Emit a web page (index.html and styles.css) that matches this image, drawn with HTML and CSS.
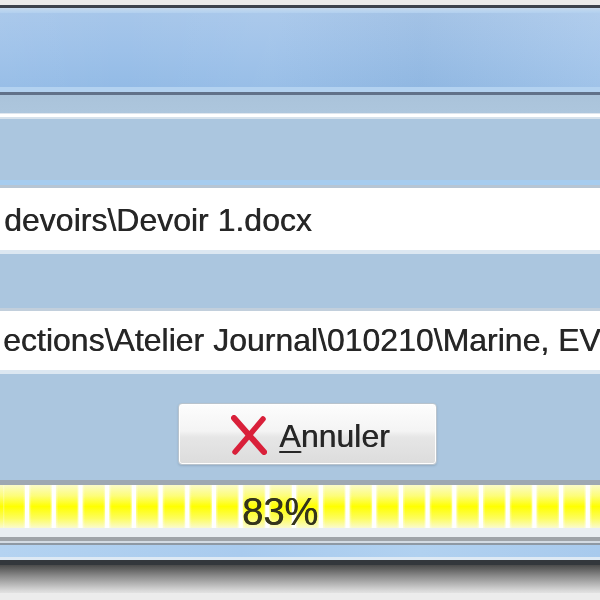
FILE: index.html
```html
<!DOCTYPE html>
<html lang="fr">
<head>
<meta charset="utf-8">
<title>Copie en cours</title>
<link rel="stylesheet" href="styles.css">
</head>
<body>
<div class="window">
  <div class="chrome-top">
    <div class="strip-light"></div>
    <div class="strip-dark"></div>
    <div class="strip-hl"></div>
  </div>
  <div class="titlebar"></div>
  <div class="title-edge">
    <div class="edge-light"></div>
    <div class="edge-dark"></div>
  </div>
  <div class="band"></div>
  <div class="band-sep"></div>
  <div class="content">
    <div class="field field-source"><span class="field-text">devoirs\Devoir 1.docx</span></div>
    <div class="field field-dest"><span class="field-text">ections\Atelier Journal\010210\Marine, EV</span></div>
    <div class="actions">
      <button class="btn" type="button">
        <svg class="btn-icon" width="40" height="42" viewBox="0 0 40 42" aria-hidden="true">
          <path d="M5 4 L35 38" stroke="#d9203a" stroke-width="6" stroke-linecap="round" fill="none"/>
          <path d="M34 5 L6 38" stroke="#d9203a" stroke-width="5.5" stroke-linecap="round" fill="none"/>
        </svg>
        <span class="btn-label"><u>A</u>nnuler</span>
      </button>
    </div>
  </div>
  <div class="progress">
    <div class="progress-fill"></div>
    <span class="progress-label">83%</span>
  </div>
  <div class="chrome-bottom">
    <div class="b-gray"></div>
    <div class="b-pale"></div>
    <div class="b-gray2"></div>
    <div class="b-blue"></div>
    <div class="b-blue-hl"></div>
    <div class="b-dark"></div>
    <div class="b-shadow"></div>
    <div class="b-base"></div>
  </div>
</div>
</body>
</html>
```

FILE: styles.css
```css
html, body {
  margin: 0;
  padding: 0;
  width: 600px;
  height: 600px;
  overflow: hidden;
  background: #ececec;
  font-family: "Liberation Sans", Arial, sans-serif;
}

.window {
  width: 600px;
  height: 600px;
  display: flex;
  flex-direction: column;
  overflow: hidden;
}

/* top window frame */
.strip-light { height: 5px; background: #ebebeb; }
.strip-dark { height: 3px; background: #3d434d; }
.strip-hl { height: 5px; background: linear-gradient(#c4d9ee, #b2d0ef); }

.titlebar {
  height: 74px;
  background:
    linear-gradient(90deg, rgba(255,255,255,0.05) 0%, rgba(0,0,0,0) 20%, rgba(255,255,255,0.06) 45%, rgba(0,0,0,0.02) 70%, rgba(255,255,255,0.12) 100%),
    linear-gradient(#a6c6ea, #9dc1e9 50%, #93bbe6);
}

.edge-light { height: 5px; background: #b3d2f0; }
.edge-dark { height: 3px; background: #617189; }

.band {
  height: 18px;
  background: linear-gradient(#aac3da, #adc6dd);
}

.band-sep {
  height: 6px;
  background: linear-gradient(#dfe6ee 0, #dfe6ee 1px, #ffffff 1px, #ffffff 4px, #d7e2ec 4px);
}

/* dialog body */
.content {
  height: 361px;
  background: #abc6df;
  display: flex;
  flex-direction: column;
}

.field {
  background: #ffffff;
  overflow: hidden;
  white-space: nowrap;
  color: #262626;
  font-size: 32px;
  box-sizing: border-box;
}

.field-text {
  display: block;
  text-shadow: 0.5px 0 0 #3a3a3a;
  filter: blur(0.45px);
}

.field-source {
  margin-top: 66px;
  height: 69px;
  border-top: 3px solid #b7c5d3;
  border-bottom: 4px solid #dce7f1;
  box-shadow: 0 -5px 0 #a6ccef;
  line-height: 62px;
  padding-left: 4px;
}

.field-source .field-text { padding-top: 1px; }

.field-dest {
  margin-top: 54px;
  height: 66px;
  border-top: 3px solid #c2cfdc;
  border-bottom: 4px solid #dce7f1;
  line-height: 59px;
  padding-left: 3px;
  letter-spacing: 0;
}

.actions {
  margin-top: 29px;
  padding-left: 178px;
  display: flex;
}

.btn {
  width: 259px;
  height: 62px;
  box-sizing: border-box;
  border: 1px solid #b9c3cc;
  border-radius: 4px;
  background: linear-gradient(#fdfdfd 0%, #f4f4f4 45%, #e6e6e6 55%, #dcdcdc 100%);
  box-shadow: inset 0 0 0 1px #ffffff, 0 1px 2px rgba(80,100,120,0.25);
  display: flex;
  align-items: center;
  justify-content: center;
  gap: 10px;
  padding: 0 0 0 4px;
  font-family: "Liberation Sans", Arial, sans-serif;
  font-size: 32px;
  color: #262626;
}

.btn-icon { display: block; margin-top: 2px; filter: blur(0.4px); }

.btn-label {
  line-height: 62px;
  padding-top: 3px;
  text-shadow: 0.5px 0 0 #3a3a3a;
  filter: blur(0.45px);
}

.btn-label u { text-decoration-thickness: 2px; text-underline-offset: 4px; }

/* progress bar */
.progress {
  position: relative;
  height: 57px;
  box-sizing: border-box;
  border-top: 5px solid #9ea8b2;
  border-bottom: 9px solid #e9eef2;
  background: #ffffff;
  overflow: hidden;
}

.progress-fill {
  height: 43px;
  background:
    repeating-linear-gradient(90deg,
      rgba(255,255,255,0.35) 0px,
      rgba(255,255,255,0) 2px,
      rgba(255,255,255,0) 20px,
      rgba(255,255,255,0.35) 21.5px,
      #ffffff 22.5px,
      #ffffff 25.7px,
      rgba(255,255,255,0.35) 26.7px),
    linear-gradient(#fbfbc8 0%, #fdfd7a 25%, #ffff00 50%, #fdfd60 78%, #fafad0 100%);
  background-position: 3px 0, 0 0;
}

.progress-label {
  position: absolute;
  left: 242px;
  top: 8px;
  font-size: 38px;
  line-height: 38px;
  color: #34341c;
  text-shadow: 0.5px 0 0 #34341c;
  filter: blur(0.5px);
}

/* bottom frame */
.b-gray { height: 4px; background: #9fa4a9; }
.b-pale { height: 2px; background: #d3dbe3; }
.b-gray2 { height: 2px; background: #8e99a4; }
.b-blue { height: 12px; background: linear-gradient(90deg, #b4d3f1, #a9cbee 40%, #b1d1f0 70%, #a8caed); }
.b-blue-hl { height: 3px; background: #dde9f4; }
.b-dark { height: 5px; background: #33373c; }
.b-shadow { height: 28px; background: linear-gradient(#4a4a4a, #8c8c8c 40%, #d6d6d6 90%, #e2e2e2); }
.b-base { height: 7px; background: #ececec; }
```
